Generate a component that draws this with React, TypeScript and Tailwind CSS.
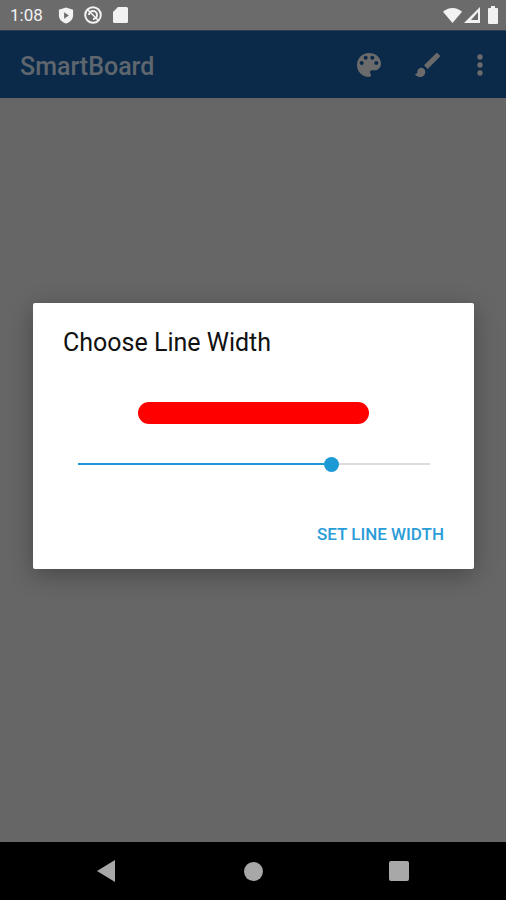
const font = "font-['Roboto',sans-serif]"

function StatusBar() {
  return (
    <div className="flex h-[30px] items-center justify-between bg-[#6b6b6b] pl-[10px] pr-[8px] text-[#f2f2f2]">
      <div className="flex items-center">
        <span className="w-[35px] text-[17px] leading-none">1:08</span>
        <svg viewBox="0 0 16 18" className="ml-[13px] h-[17px] w-[16px]" fill="currentColor">
          <path d="M8 0.5 15.5 3v6c0 4-3 7-7.5 8.500C3.500 16 .5 13 .5 9V3z" />
          <path d="M6 5.500 11 9 6 12.500z" fill="#6b6b6b" />
        </svg>
        <svg viewBox="0 0 18 18" className="ml-[10px] h-[18px] w-[18px]" fill="none" stroke="currentColor" strokeWidth="2">
          <circle cx="9" cy="9" r="7.800" />
          <path d="M5 9a4 4 0 1 1 4 4" />
          <path d="M4 4l10 10" strokeWidth="1.500" />
        </svg>
        <svg viewBox="0 0 15 16" className="ml-[11px] h-[16px] w-[15px]" fill="currentColor">
          <path d="M5 0h8.500A1.500 1.500 0 0 1 15 1.500v13a1.500 1.500 0 0 1-1.500 1.500h-12A1.500 1.500 0 0 1 0 14.500V5z" />
        </svg>
      </div>
      <div className="flex items-center">
        <svg viewBox="0 0 18 14" className="h-[15px] w-[19px]" fill="currentColor">
          <path d="M9 14 0 3.500C2.500 1.300 5.500 0 9 0s6.500 1.300 9 3.500z" />
        </svg>
        <svg viewBox="0 0 16 16" className="ml-[2px] h-[16px] w-[16px]" fill="currentColor">
          <path fillRule="evenodd" d="M16 0v16H0zM14 5 7 13h7z" />
        </svg>
        <svg viewBox="0 0 10 18" className="ml-[8px] h-[18px] w-[10px]" fill="currentColor">
          <path d="M3 0h4v2h2a1 1 0 0 1 1 1v14a1 1 0 0 1-1 1H1a1 1 0 0 1-1-1V3a1 1 0 0 1 1-1h2z" />
        </svg>
      </div>
    </div>
  )
}

function AppBar() {
  return (
    <div className="flex h-[68px] items-center border-t border-[#5a5f66]/40 bg-[#0b2a4a] pl-[20px] pr-[10px] text-[#6b6b6b]">
      <h1 className="flex-1 pt-[3px] text-[25px] font-medium leading-none text-[#5f666e]">SmartBoard</h1>
      <div className="flex items-center">
        <svg viewBox="0 0 24 24" className="h-8 w-8" fill="currentColor">
          <path d="M12 3c-4.970 0-9 4.030-9 9s4.030 9 9 9c.83 0 1.500-.67 1.500-1.500 0-.39-.15-.74-.39-1.010-.23-.26-.38-.61-.38-.99 0-.83.67-1.500 1.500-1.500H16c2.760 0 5-2.240 5-5 0-4.420-4.030-8-9-8zm-5.500 9c-.83 0-1.500-.67-1.500-1.500S5.670 9 6.500 9 8 9.670 8 10.500 7.330 12 6.500 12zm3-4C8.670 8 8 7.330 8 6.500S8.670 5 9.500 5s1.500.67 1.500 1.500S10.330 8 9.500 8zm5 0c-.83 0-1.500-.67-1.500-1.500S13.670 5 14.500 5s1.500.67 1.500 1.500S15.330 8 14.500 8zm3 4c-.83 0-1.500-.67-1.500-1.500S16.670 9 17.500 9s1.500.67 1.500 1.500-.67 1.500-1.500 1.500z" />
        </svg>
        <svg viewBox="0 0 24 24" className="ml-[27px] h-8 w-8" fill="currentColor">
          <path d="M7 14c-1.660 0-3 1.340-3 3 0 1.310-1.160 2-2 2 .92 1.220 2.490 2 4 2 2.210 0 4-1.790 4-4 0-1.660-1.340-3-3-3zm13.710-9.370-1.340-1.340c-.39-.39-1.020-.39-1.410 0L9 12.250 11.750 15l8.960-8.960c.39-.39.39-1.020 0-1.410z" />
        </svg>
        <svg viewBox="0 0 24 24" className="ml-[20px] h-8 w-8" fill="currentColor">
          <circle cx="12" cy="6" r="2" />
          <circle cx="12" cy="12" r="2" />
          <circle cx="12" cy="18" r="2" />
        </svg>
      </div>
    </div>
  )
}

function LineWidthDialog() {
  return (
    <div className="flex h-[266px] w-[441px] flex-col rounded-[2px] bg-white shadow-[0_6px_24px_rgba(0,0,0,0.3)]">
      <h2 className="ml-[30px] mt-[26px] text-[25px] leading-[28px] text-[#111]">Choose Line Width</h2>
      <div className="ml-[105px] mt-[45px] h-[22px] w-[231px] rounded-full bg-[#ff0000]" />
      <div className="ml-[45px] mt-[33px] flex h-[14px] w-[352px] items-center">
        <div className="h-[2px] w-[246px] bg-[#1c9ad6]" />
        <div className="h-[15px] w-[15px] shrink-0 rounded-full bg-[#1c9ad6]" />
        <div className="h-[2px] flex-1 bg-[#dcdcdc]" />
      </div>
      <div className="mr-[30px] mt-[53px] text-right text-[17px] font-medium leading-[20px] text-[#2a9dd8]">SET LINE WIDTH</div>
    </div>
  )
}

function NavBar() {
  return (
    <div className="relative flex h-[58px] items-center bg-black text-[#a8a8a8]">
      <svg viewBox="0 0 18 22" className="ml-[97px] h-[22px] w-[18px]" fill="currentColor">
        <path d="M18 0v22L0 11z" />
      </svg>
      <div className="ml-[129px] h-[19px] w-[19px] rounded-full bg-[#a8a8a8]" />
      <div className="ml-[126px] h-[20px] w-[20px] rounded-[2px] bg-[#a8a8a8]" />
    </div>
  )
}

export default function App() {
  return (
    <div className={`flex h-[900px] w-[506px] flex-col overflow-hidden bg-[#666666] ${font}`}>
      <StatusBar />
      <AppBar />
      <div className="flex-1 pl-[33px] pt-[205px]">
        <LineWidthDialog />
      </div>
      <NavBar />
    </div>
  )
}
